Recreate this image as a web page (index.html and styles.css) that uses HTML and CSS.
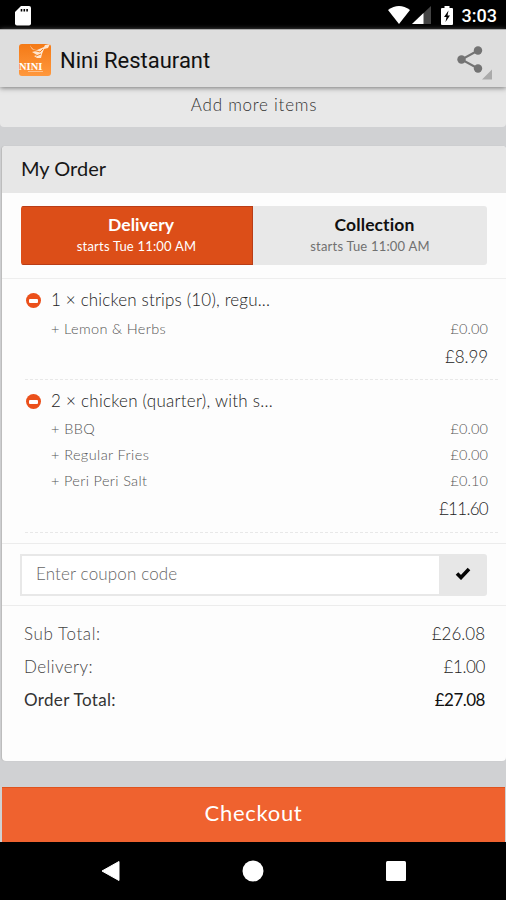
FILE: index.html
```html
<!DOCTYPE html>
<html lang="en">
<head>
<meta charset="utf-8">
<title>Nini Restaurant</title>
<link rel="stylesheet" href="styles.css">
</head>
<body>
<div class="statusbar">
  <svg class="sd" width="16" height="20" viewBox="0 0 16 20"><path fill="#fff" d="M6 0h8q2 0 2 2v15.500q0 2-2 2H2q-2 0-2-2V6z"/><path stroke="#000" stroke-width="1.600" d="M6.500 3v2.500M9.300 3v2.500M12.100 3v2.500"/></svg>
  <div class="signals">
    <svg width="22" height="18" viewBox="0 0 22 18"><path fill="#fff" d="M0 4Q11-4 22 4L11 18z"/></svg>
    <svg width="19" height="18" viewBox="0 0 19 18"><path fill="#444" d="M19 0v18H0z"/><path fill="#fff" d="M11.500 7.100V18H0z"/></svg>
    <svg class="battery" width="12" height="19" viewBox="0 0 12 19"><path fill="#fff" d="M3.500 0h5v2H11q1 0 1 1v15q0 1-1 1H1q-1 0-1-1V3q0-1 1-1h2.500z"/><path fill="#000" d="M7.500 4.500 3 11h2.500l-1 5L9 9.500H6.500z"/></svg>
    <span class="clock">3:03</span>
  </div>
</div>
<header class="appbar">
  <div class="logo">
    <svg width="32" height="32" viewBox="0 0 32 32"><path fill="#ffe5ce" d="M11 1q2 5 7 5l7-3 1-2 5-1-2 4-4 1-2 5-1 4-4 0-3-2 3-1-5-3 4-1q-5-1-6-6z"/><path fill="none" stroke="#f58220" stroke-width="1" d="m14 6 7 2 3-3M17 12l5-2"/><path stroke="#ffc18b" d="M9 27.500h15"/></svg>
    <span>NINI</span>
  </div>
  <h1>Nini Restaurant</h1>
  <svg class="share" width="36" height="36" viewBox="0 0 36 36"><path d="M22 6.500 5.500 15.500 22 24.500" fill="none" stroke="#737373" stroke-width="2"/><g fill="#737373"><circle cx="22" cy="6.500" r="4.200"/><circle cx="5.500" cy="15.500" r="4.200"/><circle cx="22" cy="24.500" r="4.200"/></g><path fill="#aaa" d="M36 25.500v10H26z"/></svg>
</header>
<main>
  <div class="more">Add more items</div>
  <section class="card">
    <h2><span>My Order</span></h2>
    <div class="tabs">
      <div class="tab active"><b>Delivery</b><small>starts Tue 11:00 AM</small></div>
      <div class="tab"><b>Collection</b><small>starts Tue 11:00 AM</small></div>
    </div>
    <div class="items">
      <div class="item">
        <div class="name"><i class="minus"></i><span class="name-a">1 × chicken strips (10), regu...</span></div>
        <div class="extra"><span>+ Lemon &amp; Herbs</span><span class="price">£0.00</span></div>
        <div class="sum">£8.99</div>
      </div>
      <div class="item">
        <div class="name"><i class="minus"></i><span class="name-b">2 × chicken (quarter), with s...</span></div>
        <div class="extra"><span>+ BBQ</span><span class="price">£0.00</span></div>
        <div class="extra"><span>+ Regular Fries</span><span class="price">£0.00</span></div>
        <div class="extra"><span>+ Peri Peri Salt</span><span class="price">£0.10</span></div>
        <div class="sum">£11.60</div>
      </div>
    </div>
    <div class="coupon">
      <div class="field">Enter coupon code</div>
      <div class="apply"><svg width="16" height="13" viewBox="0 0 16 13"><path d="m2 6.500 4 4L14 2" fill="none" stroke="#050505" stroke-width="3.600"/></svg></div>
    </div>
    <div class="totals">
      <div><span>Sub Total:</span><span class="amount">£26.08</span></div>
      <div class="fee"><span>Delivery:</span><span class="amount">£1.00</span></div>
      <div class="grand"><span>Order Total:</span><span class="amount">£27.08</span></div>
    </div>
  </section>
  <div class="checkout">Checkout</div>
</main>
<nav>
  <svg width="19" height="22" viewBox="0 0 19 22"><path fill="#fff" stroke="#fff" stroke-linejoin="round" d="M18 1.500v19L1 11z"/></svg>
  <svg width="22" height="22" viewBox="0 0 22 22"><circle cx="11" cy="11" r="10.500" fill="#fff"/></svg>
  <svg width="20" height="20" viewBox="0 0 20 20"><rect width="20" height="20" rx="1.500" fill="#fff"/></svg>
</nav>
</body>
</html>
```

FILE: styles.css
```css
* { box-sizing: border-box; }
body { margin: 0; width: 506px; height: 900px; overflow: hidden; display: flex; flex-direction: column; background: #d0d1d3; font-family: Lato, "Open Sans", sans-serif; color: #555; }
svg { display: block; flex: none; }
h1, h2 { margin: 0; font-weight: 400; }
.statusbar { height: 29px; flex: none; background: #000; display: flex; justify-content: space-between; padding: 6px 9px 0 15px; }
.signals { display: flex; gap: 2px; }
.battery { margin-left: 8px; }
.clock { margin-left: 7px; color: #fff; font: 500 18px/20px Roboto, sans-serif; }
.appbar { height: 58px; flex: none; display: flex; align-items: center; padding: 2px 14px 0 19px; background: #dedede; border-top: 1px solid #aaa; box-shadow: 0 1px 5px #777; position: relative; z-index: 1; }
.logo { width: 32px; height: 32px; border-radius: 3px; background: linear-gradient(#f47a16, #ff983d); position: relative; }
.logo span { position: absolute; left: 0; bottom: 4px; color: #fff; font: 700 10.500px/10px "Liberation Serif", serif; }
.appbar h1 { margin: 3px 0 0 9px; font: 400 22px/28px Roboto, sans-serif; color: #111; flex: 1; }
.share { margin-top: 4px; }
main { flex: none; height: 755px; }
.more { height: 40px; background: #e8e8e8; text-align: center; padding-left: 2px; font-size: 17px; font-weight: 300; color: #333; line-height: 36px; letter-spacing: .75px; border-radius: 0 0 4px 4px; }
.card { margin: 19px 0 0 2px; width: 504px; height: 615px; border-radius: 4px; background: #fdfdfd; overflow: hidden; box-shadow: -1px 0 1px #bbb; }
.card h2 { height: 47px; background: #e7e7e7; color: #171717; padding-left: 19px; font-size: 20px; line-height: 45px; }
.tabs { display: flex; margin: 13px 0 0 19px; width: 466px; height: 59px; border-radius: 3px; overflow: hidden; background: #e8e8e8; }
.tab { flex: 1; display: flex; flex-direction: column; align-items: center; color: #111; padding-top: 8px; }
.tab.active { flex: 0 0 232px; background: #dc4e18; color: #fff; border: 1px solid #b93d17; border-width: 1px 1px 1px 0; padding-top: 7px; }
.tab b { font-size: 17.500px; font-weight: 700; line-height: 22px; padding-left: 9px; letter-spacing: .1px; }
.tab small { font-size: 13px; line-height: 20px; letter-spacing: .2px; color: #707070; }
.tab.active small { color: #fff; }
.items { margin-top: 13px; height: 265px; border-top: 1px solid #eee; }
.item { margin-left: 23px; margin-right: 8px; border-bottom: 1px dashed #e8e8e8; padding: 7px 10px 8px 0; }
.item:first-child { height: 101px; }
.item:last-child { height: 153px; padding-top: 7px; }
.name { display: flex; height: 26px; align-items: center; font-size: 17px; font-weight: 300; color: #222; }
.name-a { letter-spacing: .17px; }
.name-b { letter-spacing: .26px; }
.minus { width: 15px; height: 15px; margin: 3px 10px 0 1px; background: #eb501b; border-radius: 50%; display: flex; align-items: center; justify-content: center; }
.minus::after { content: ""; width: 9px; height: 4px; background: #fff; border-radius: 1px; }
.extra { height: 26px; padding-left: 26px; display: flex; justify-content: space-between; align-items: center; font-size: 14.500px; font-weight: 300; letter-spacing: .4px; color: #555; }
.extra:nth-last-child(2) { letter-spacing: .35px; }
.price { letter-spacing: .1px; }
.item:first-child .extra { height: 32px; }
.item:last-child .name { height: 28px; padding-bottom: 2px; }
.sum { height: 26px; line-height: 26px; text-align: right; font-size: 17px; font-weight: 300; color: #222; letter-spacing: -.1px; }
.item:last-child .sum { line-height: 31px; letter-spacing: -.7px; }
.coupon { height: 63px; border: solid #ececec; border-width: 1px 0; padding: 10px 0 0 18px; display: flex; }
.field { width: 419px; height: 42px; border: 2px solid #e8e8e8; border-right: 0; background: #fff; padding-left: 14px; line-height: 36px; font-size: 17px; font-weight: 300; letter-spacing: .15px; color: #666; }
.apply { width: 48px; height: 42px; background: #e7e7e7; border-radius: 0 3px 3px 0; display: flex; align-items: center; justify-content: center; padding-bottom: 4px; }
.totals { padding: 11px 21px 0 22px; font-size: 17px; font-weight: 300; letter-spacing: .6px; color: #444; }
.totals div { display: flex; justify-content: space-between; align-items: center; height: 33px; }
.amount { color: #222; letter-spacing: 0; }
.fee { letter-spacing: .45px; }
.fee .amount { letter-spacing: -.4px; }
.totals .grand { color: #333; font-weight: 400; letter-spacing: .35px; }
.grand .amount { color: #111; letter-spacing: -.5px; }
.checkout { height: 55px; margin: 26px 1px 0 2px; background: #ef622f; border-top: 1px solid #df531d; color: #fff; text-align: center; font-size: 22px; line-height: 49px; letter-spacing: .7px; }
nav { height: 58px; flex: none; background: #000; display: flex; align-items: center; gap: 122px; padding-left: 101px; }
```
